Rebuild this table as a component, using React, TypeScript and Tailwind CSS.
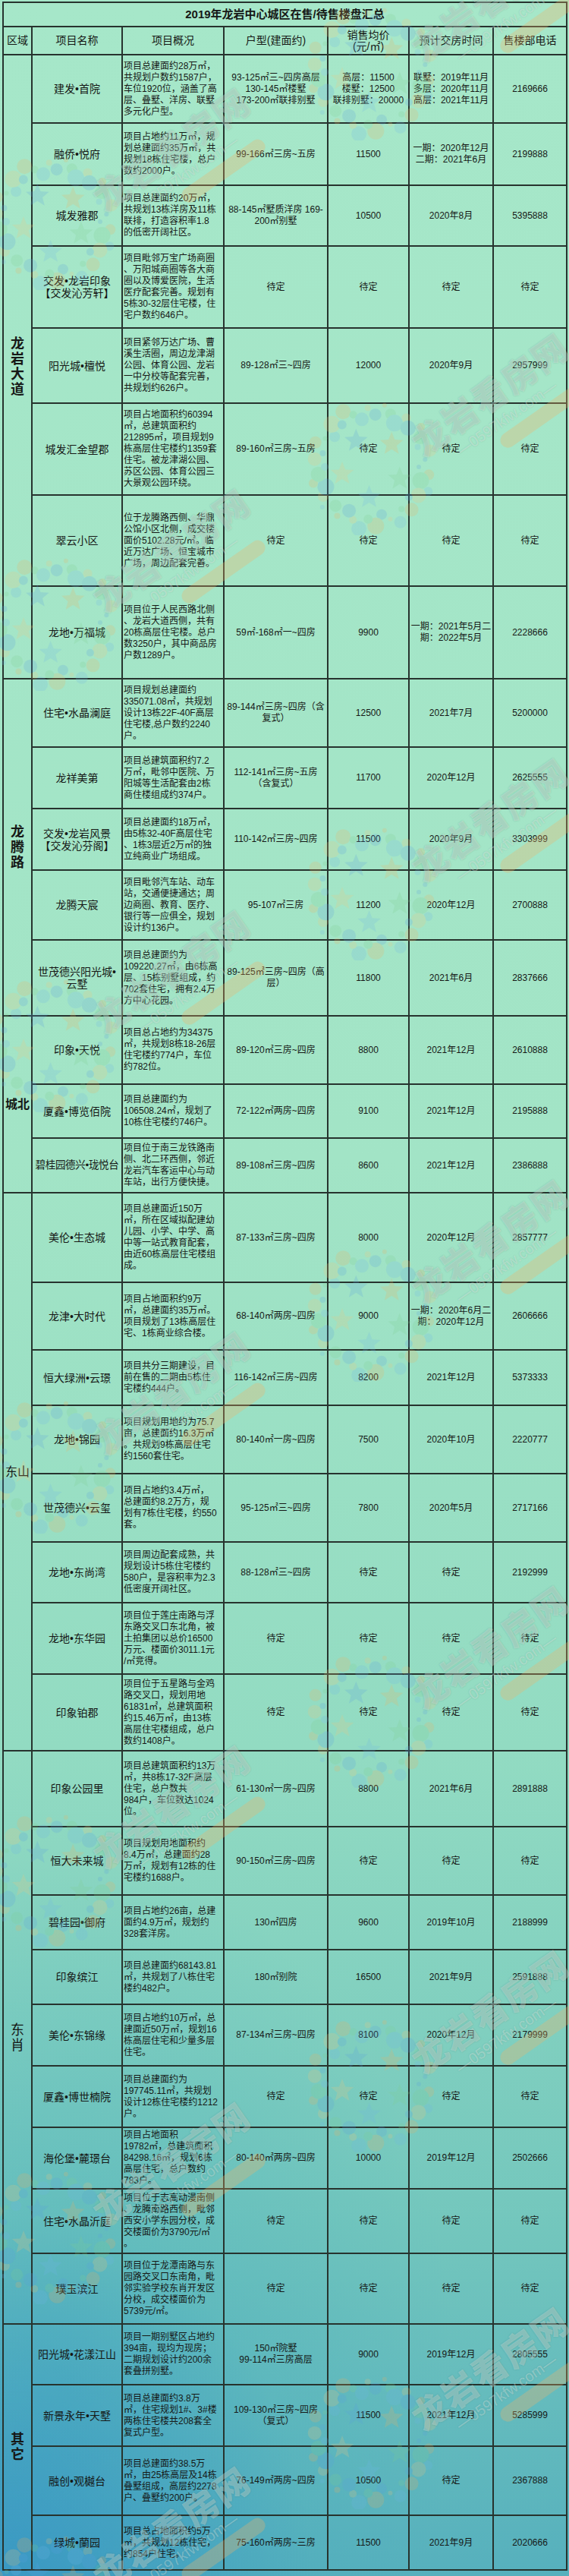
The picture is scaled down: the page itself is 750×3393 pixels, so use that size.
import * as React from "react"

type Row = {
  name: string
  desc: string
  unit: string
  price: string
  date: string
  tel: string
  h: string
  tight?: boolean
}

type Region = {
  label: string
  vertical: boolean
  bold: boolean
  rows: Row[]
}

const TBD = "待定"

// h = row pitch in the reference, bottom rule included
const regions: Region[] = [
  {
    label: "龙岩大道",
    vertical: true,
    bold: true,
    rows: [
      { name: "建发•首院", desc: "项目总建面约28万㎡，|共规划户数约1587户，|车位1920位，涵盖了高|层、叠墅、洋房、联墅|多元化户型。", unit: "93-125㎡三~四房高层|130-145㎡楼墅|173-200㎡联排别墅", price: "高层：11500|楼墅：12500|联排别墅：20000", date: "联墅：2019年11月|多层：2020年11月|高层：2021年11月", tel: "2169666", h: "h-[90px]" },
      { name: "融侨•悦府", desc: "项目占地约11万㎡，规|划总建面约35万㎡，共|规划18栋住宅楼，总户|数约2000户。", unit: "99-166㎡三房~五房", price: "11500", date: "一期：2020年12月|二期：2021年6月", tel: "2199888", h: "h-[82px]" },
      { name: "城发雅郡", desc: "项目总建面约20万㎡，|共规划13栋洋房及11栋|联排，打造容积率1.8|的低密开阔社区。", unit: "88-145㎡墅质洋房 169-|200㎡别墅", price: "10500", date: "2020年8月", tel: "5395888", h: "h-[80px]" },
      { name: "交发•龙岩印象|【交发沁芳轩】", desc: "项目毗邻万宝广场商圈|、万阳城商圈等各大商|圈以及博爱医院，生活|医疗配套完善。规划有|5栋30-32层住宅楼，住|宅户数约646户。", unit: TBD, price: TBD, date: TBD, tel: TBD, h: "h-[108px]" },
      { name: "阳光城•檀悦", desc: "项目紧邻万达广场、曹|溪生活圈，周边龙津湖|公园、体育公园、龙岩|一中分校等配套完善，|共规划约626户。", unit: "89-128㎡三~四房", price: "12000", date: "2020年9月", tel: "2957999", h: "h-[99px]" },
      { name: "城发汇金望郡", desc: "项目占地面积约60394|㎡，总建筑面积约|212895㎡，项目规划9|栋高层住宅楼约1359套|住宅。被龙津湖公园、|苏区公园、体育公园三|大景观公园环绕。", unit: "89-160㎡三房~五房", price: TBD, date: TBD, tel: TBD, h: "h-[121px]" },
      { name: "翠云小区", desc: "位于龙腾路西侧、华鼎|公馆小区北侧，成交楼|面价5102.28元/㎡。临|近万达广场、恒宝城市|广场，周边配套完善。", unit: TBD, price: TBD, date: TBD, tel: TBD, h: "h-[120px]" },
      { name: "龙地•万福城", desc: "项目位于人民西路北侧|、龙岩大道西侧，共有|20栋高层住宅楼。总户|数3250户，其中商品房|户数1289户。", unit: "59㎡-168㎡一~四房", price: "9900", date: "一期：2021年5月二|期：2022年5月", tel: "2228666", h: "h-[122px]" },
    ],
  },
  {
    label: "龙腾路",
    vertical: true,
    bold: true,
    rows: [
      { name: "住宅•水晶澜庭", desc: "项目规划总建面约|335071.08㎡，共规划|设计13栋22F-40F高层|住宅楼,总户数约2240|户。", unit: "89-144㎡三房~四房（含|复式）", price: "12500", date: "2021年7月", tel: "5200000", h: "h-[90px]" },
      { name: "龙祥美第", desc: "项目总建筑面积约7.2|万㎡，毗邻中医院、万|阳城等生活配套由2栋|商住楼组成约374户。", unit: "112-141㎡三房~五房|（含复式）", price: "11700", date: "2020年12月", tel: "2625555", h: "h-[81px]" },
      { name: "交发•龙岩风景|【交发沁芬阁】", desc: "项目总建面约18万㎡，|由5栋32-40F高层住宅|、1栋3层近2万㎡的独|立纯商业广场组成。", unit: "110-142㎡三房~四房", price: "11500", date: "2020年9月", tel: "3303999", h: "h-[81px]" },
      { name: "龙腾天宸", desc: "项目毗邻汽车站、动车|站，交通便捷通达；周|边商圈、教育、医疗、|银行等一应俱全，规划|设计约136户。", unit: "95-107㎡三房", price: "11200", date: "2020年12月", tel: "2700888", h: "h-[92px]" },
      { name: "世茂德兴阳光城•|云墅", desc: "项目总建面约为|109220.27㎡，由6栋高|层、15栋别墅组成，约|702套住宅，拥有2.4万|方中心花园。", unit: "89-125㎡三房~四房（高|层）", price: "11800", date: "2021年6月", tel: "2837666", h: "h-[100px]" },
    ],
  },
  {
    label: "城北",
    vertical: false,
    bold: true,
    rows: [
      { name: "印象•天悦", desc: "项目总占地约为34375|㎡，共规划8栋18-26层|住宅楼约774户，车位|约782位。", unit: "89-120㎡三房~四房", price: "8800", date: "2021年12月", tel: "2610888", h: "h-[90px]" },
      { name: "厦鑫•博览佰院", desc: "项目总建面约为|106508.24㎡，规划了|10栋住宅楼约746户。", unit: "72-122㎡两房~四房", price: "9100", date: "2021年12月", tel: "2195888", h: "h-[71px]" },
      { name: "碧桂园德兴•珑悦台", desc: "项目位于南三龙铁路南|侧、北二环西侧，邻近|龙岩汽车客运中心与动|车站，出行方便快捷。", unit: "89-108㎡三房~四房", price: "8600", date: "2021年12月", tel: "2386888", h: "h-[72px]", tight: true },
    ],
  },
  {
    label: "东山",
    vertical: false,
    bold: false,
    rows: [
      { name: "美伦•生态城", desc: "项目总建面近150万|㎡，所在区域拟配建幼|儿园、小学、中学、高|中等一站式教育配套，|由近60栋高层住宅楼组|成。", unit: "87-133㎡三房~四房", price: "8000", date: "2020年12月", tel: "2857777", h: "h-[118px]" },
      { name: "龙津•大时代", desc: "项目占地面积约9万|㎡，总建面约35万㎡。|项目规划了13栋高层住|宅、1栋商业综合楼。", unit: "68-140㎡两房~四房", price: "9000", date: "一期：2020年6月二|期：2020年12月", tel: "2606666", h: "h-[89px]" },
      { name: "恒大绿洲•云璟", desc: "项目共分三期建设，目|前在售的二期由5栋住|宅楼约444户。", unit: "116-142㎡三房~四房", price: "8200", date: "2021年12月", tel: "5373333", h: "h-[73px]" },
      { name: "龙地•锦园", desc: "项目规划用地约为75.7|亩，总建面约16.3万㎡|。共规划9栋高层住宅|约1560套住宅。", unit: "80-140㎡一房~四房", price: "7500", date: "2020年10月", tel: "2220777", h: "h-[90px]" },
      { name: "世茂德兴•云玺", desc: "项目占地约3.4万㎡，|总建面约8.2万方，规|划有7栋住宅楼，约550|套。", unit: "95-125㎡三~四房", price: "7800", date: "2020年5月", tel: "2717166", h: "h-[90px]" },
      { name: "龙地•东尚湾", desc: "项目周边配套成熟，共|规划设计5栋住宅楼约|580户，是容积率为2.3|低密度开阔社区。", unit: "88-128㎡三~四房", price: TBD, date: TBD, tel: "2192999", h: "h-[80px]" },
      { name: "龙地•东华园", desc: "项目位于莲庄南路与浮|东路交叉口东北角，被|土拍集团以总价16500|万元、楼面价3011.1元|/㎡竞得。", unit: TBD, price: TBD, date: TBD, tel: TBD, h: "h-[94px]" },
      { name: "印象铂郡", desc: "项目位于五星路与金鸡|路交叉口，规划用地|61831㎡，总建筑面积|约15.46万㎡，由13栋|高层住宅楼组成，总户|数约1408户。", unit: TBD, price: TBD, date: TBD, tel: TBD, h: "h-[101px]" },
    ],
  },
  {
    label: "东肖",
    vertical: true,
    bold: false,
    rows: [
      { name: "印象公园里", desc: "项目总建筑面积约13万|㎡，共8栋17-32F高层|住宅，总户数共|984户，车位数达1024|位。", unit: "61-130㎡一房~四房", price: "8800", date: "2021年6月", tel: "2891888", h: "h-[100px]" },
      { name: "恒大未来城", desc: "项目规划用地面积约|8.4万㎡，总建面约28|万㎡，规划有12栋的住|宅楼约1688户。", unit: "90-150㎡三房~四房", price: TBD, date: TBD, tel: TBD, h: "h-[90px]" },
      { name: "碧桂园•御府", desc: "项目占地约26亩，总建|面约4.9万㎡，规划约|328套洋房。", unit: "130㎡四房", price: "9600", date: "2019年10月", tel: "2188999", h: "h-[72px]" },
      { name: "印象缤江", desc: "项目总建面约68143.81|㎡，共规划了八栋住宅|楼约482户。", unit: "180㎡别院", price: "16500", date: "2021年9月", tel: "2591888", h: "h-[72px]" },
      { name: "美伦•东锦缘", desc: "项目占地约10万㎡，总|建面近50万㎡，规划16|栋高层住宅和少量多层|住宅。", unit: "87-134㎡三房~四房", price: "8100", date: "2020年12月", tel: "2179999", h: "h-[81px]" },
      { name: "厦鑫•博世楠院", desc: "项目总建面约为|197745.11㎡，共规划|设计12栋住宅楼约1212|户。", unit: TBD, price: TBD, date: TBD, tel: TBD, h: "h-[81px]" },
      { name: "海伦堡•麓璟台", desc: "项目占地面积|19782㎡，总建筑面积|84298.16㎡，规划6栋|高层住宅，总户数约|783户。", unit: "80-140㎡两房~四房", price: "10000", date: "2019年12月", tel: "2502666", h: "h-[81px]" },
      { name: "住宅•水晶沂庭", desc: "项目位于志高动漫南侧|、龙腾南路西侧，毗邻|西安小学东园分校，成|交楼面价为3790元/㎡|。", unit: TBD, price: TBD, date: TBD, tel: TBD, h: "h-[85px]" },
      { name: "璞玉滨江", desc: "项目位于龙潭南路与东|园路交叉口东南角，毗|邻实验学校东肖开发区|分校，成交楼面价为|5739元/㎡。", unit: TBD, price: TBD, date: TBD, tel: TBD, h: "h-[93px]" },
    ],
  },
  {
    label: "其它",
    vertical: true,
    bold: true,
    rows: [
      { name: "阳光城•花漾江山", desc: "项目一期别墅区占地约|394亩，现均为现房；|二期规划设计约200余|套叠拼别墅。", unit: "150㎡院墅|99-114㎡三房高层", price: "9000", date: "2019年12月", tel: "2805555", h: "h-[80px]" },
      { name: "新景永年•天墅", desc: "项目总建面约3.8万|㎡，住宅规划1#、3#楼|两栋住宅楼共208套全|复式户型。", unit: "109-130㎡三房~四房|（复式）", price: "11500", date: "2021年12月", tel: "5285999", h: "h-[81px]" },
      { name: "融创•观樾台", desc: "项目总建面约38.5万|㎡，由25栋高层及14栋|叠墅组成，高层约2278|户、叠墅约200户。", unit: "76-149㎡两房~四房", price: "10500", date: TBD, tel: "2367888", h: "h-[91px]" },
      { name: "绿城•蘭园", desc: "项目总占地面积约5万|㎡，共规划12栋住宅，|约854户住宅。", unit: "75-160㎡两房~三房", price: "11500", date: "2021年9月", tel: "2020666", h: "h-[72px]" },
    ],
  },
]

// watermark centres, read off the reference
const leftMarks = [217, 745, 1300, 1855, 2400, 2870, 3350]
const rightMarks = [20, 540, 1100, 1655, 2190, 2670, 3140]

const line = "border-[#27332e]"
const cellBase = `flex items-center border-r-2 ${line}`

function Lines({ text, className }: { text: string; className?: string }) {
  return (
    <div className={className}>
      {text.split("|").map((l, i) => (
        <div key={i} className="whitespace-nowrap">
          {l}
        </div>
      ))}
    </div>
  )
}

function DotRing() {
  const colors = ["#5a9fe0", "#f2b05c", "#7fcf8f", "#6fb6e8", "#f5c77a"]
  const dots = []
  for (let i = 0; i < 46; i++) {
    const a = (i / 46) * Math.PI * 2
    const r = 62 + ((i * 37) % 23)
    const size = 3 + ((i * 13) % 9)
    dots.push(
      <circle
        key={i}
        cx={90 + Math.cos(a) * r}
        cy={90 + Math.sin(a) * r}
        r={size}
        fill={colors[i % colors.length]}
      />
    )
  }
  const stars = [0, 1, 2, 3, 4].map((i) => {
    const a = (i / 5) * Math.PI * 2 + 0.4
    const x = 90 + Math.cos(a) * 40
    const y = 90 + Math.sin(a) * 40
    const pts = []
    for (let k = 0; k < 10; k++) {
      const rr = k % 2 === 0 ? 16 : 7
      const t = (k / 10) * Math.PI * 2 - Math.PI / 2
      pts.push(`${(x + Math.cos(t) * rr).toFixed(1)},${(y + Math.sin(t) * rr).toFixed(1)}`)
    }
    return <polygon key={i} points={pts.join(" ")} fill={colors[(i + 2) % colors.length]} />
  })
  return (
    <svg width="180" height="180" viewBox="0 0 180 180" className="opacity-20">
      {dots}
      {stars}
    </svg>
  )
}

function Watermark({ x, y }: { x: number; y: number }) {
  return (
    <div className="absolute h-[320px] w-[520px]" style={{ left: x - 260, top: y - 160 }}>
      <div className="absolute left-[0px] top-[145px]">
        <DotRing />
      </div>
      <div className="absolute left-[260px] top-[160px] -translate-x-1/2 -translate-y-1/2 -rotate-[35deg]">
        <div className="flex flex-col items-center">
          <div className="whitespace-nowrap text-[46px] font-black leading-[50px] tracking-[2px] text-white/30 [text-shadow:0_0_2px_rgba(40,90,70,0.25)]">
            龙岩看房网
          </div>
          <div className="whitespace-nowrap text-[20px] leading-[22px] text-white/30 [text-shadow:0_0_2px_rgba(40,90,70,0.2)]">
            —0597kfw.com—
          </div>
          <div className="mt-[4px] h-[20px] w-[130px] translate-x-[40px] rounded-full bg-[#f2b366]/30" />
        </div>
      </div>
    </div>
  )
}

function RegionLabel({ region }: { region: Region }) {
  const weight = region.bold ? "font-bold" : "font-normal"
  if (region.vertical) {
    return (
      <div className={`flex flex-col items-center text-[18px] leading-[20px] ${weight}`}>
        {region.label.split("").map((c, i) => (
          <span key={i}>{c}</span>
        ))}
      </div>
    )
  }
  return <div className={`whitespace-nowrap text-[16px] leading-[18px] ${weight}`}>{region.label}</div>
}

function DataRow({ r }: { r: Row }) {
  return (
    <div className={`flex border-b-2 ${line} ${r.h}`}>
      <div className={`${cellBase} w-[119px] justify-center text-center`}>
        <Lines
          text={r.name}
          className={r.tight ? "text-[13.5px] leading-[16px] tracking-[-0.3px]" : "text-[14px] leading-[16px]"}
        />
      </div>
      <div className={`${cellBase} w-[134px] pl-[1px]`}>
        <Lines text={r.desc} className="text-[12px] leading-[15px]" />
      </div>
      <div className={`${cellBase} w-[137px] justify-center text-center`}>
        <Lines text={r.unit} className="text-[12px] leading-[15px]" />
      </div>
      <div className={`${cellBase} w-[107px] justify-center text-center`}>
        <Lines text={r.price} className="text-[12px] leading-[15px]" />
      </div>
      <div className={`${cellBase} w-[111px] justify-center text-center`}>
        <Lines text={r.date} className="text-[12px] leading-[15px]" />
      </div>
      <div className="flex w-[95px] items-center justify-center text-center">
        <Lines text={r.tel} className="text-[12px] leading-[15px]" />
      </div>
    </div>
  )
}

export default function App() {
  return (
    <div className="relative h-[3393px] w-[750px] overflow-hidden bg-[radial-gradient(ellipse_55%_14%_at_0%_100%,rgba(40,135,200,0.55),transparent),radial-gradient(ellipse_70%_20%_at_10%_92%,rgba(50,160,190,0.35),transparent),linear-gradient(180deg,#a6e7c9_0%,#a2e4c6_45%,#92dbc2_68%,#74c7bd_86%,#56b0bd_100%)] font-['Liberation_Sans','Noto_Sans_CJK_SC',sans-serif] text-[#161816]">
      <div className="pl-[3px] pt-[2px]">
        <div className={`w-[745px] border-x-2 border-t-2 ${line}`}>
          <div className={`flex h-[32px] items-center justify-center border-b-2 ${line} text-[15px] font-bold`}>
            2019年龙岩中心城区在售/待售楼盘汇总
          </div>
          <div className={`flex h-[37px] border-b-2 ${line} text-[14px]`}>
            <div className={`${cellBase} w-[38px] justify-center`}>区域</div>
            <div className={`${cellBase} w-[119px] justify-center`}>项目名称</div>
            <div className={`${cellBase} w-[134px] justify-center`}>项目概况</div>
            <div className={`${cellBase} w-[137px] justify-center`}>户型(建面约)</div>
            <div className={`${cellBase} w-[107px] justify-center text-center leading-[15px]`}>
              <div>
                <div>销售均价</div>
                <div>(元/㎡)</div>
              </div>
            </div>
            <div className={`${cellBase} w-[111px] justify-center`}>预计交房时间</div>
            <div className="flex w-[95px] items-center justify-center">售楼部电话</div>
          </div>
          {regions.map((region) => (
            <div key={region.label} className="flex">
              <div className={`flex w-[38px] shrink-0 items-center justify-center border-r-2 border-b-2 ${line}`}>
                <RegionLabel region={region} />
              </div>
              <div className="flex w-[703px] flex-col">
                {region.rows.map((r, i) => (
                  <DataRow key={i} r={r} />
                ))}
              </div>
            </div>
          ))}
        </div>
      </div>
      <div className="pointer-events-none absolute inset-0">
        {leftMarks.map((y) => (
          <Watermark key={"l" + y} x={240} y={y} />
        ))}
        {rightMarks.map((y) => (
          <Watermark key={"r" + y} x={660} y={y} />
        ))}
      </div>
    </div>
  )
}
